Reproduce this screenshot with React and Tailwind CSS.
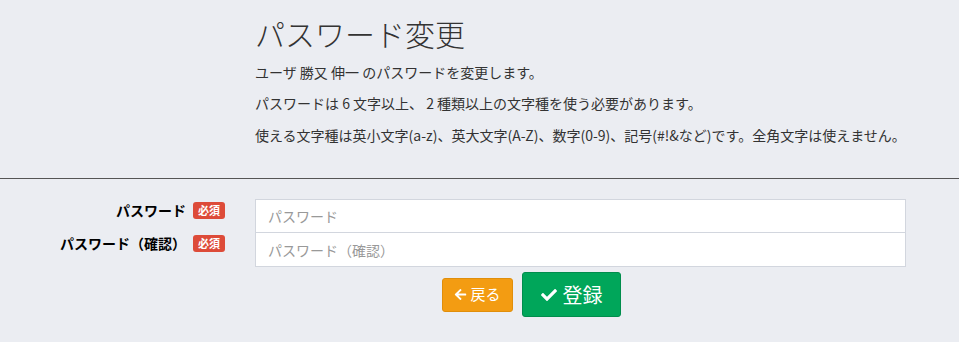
import { FaArrowLeft, FaCheck } from 'react-icons/fa';

export default function App() {
  return (
    <div
      className="min-h-[342px] w-full bg-[#ebedf2] text-[#333] overflow-hidden"
      style={{ fontFamily: '"Noto Sans CJK JP", "Noto Sans", sans-serif' }}
    >
      {/* ヘッダー */}
      <div className="pl-[255px] pt-[17px]">
        <h1 className="text-[30px] leading-[33px] font-light mb-[12px]">パスワード変更</h1>
        <p className="text-[14px] leading-[20px] mb-[11px]">ユーザ 勝又 伸一 のパスワードを変更します。</p>
        <p className="text-[14px] leading-[20px] mb-[12px]">パスワードは 6 文字以上、 2 種類以上の文字種を使う必要があります。</p>
        <p className="text-[14px] leading-[20px]">使える文字種は英小文字(a-z)、英大文字(A-Z)、数字(0-9)、記号(#!&amp;など)です。全角文字は使えません。</p>
      </div>

      <hr className="mt-[33px] border-t border-[#555]" />

      {/* フォーム */}
      <div className="mt-[20px]">
        <div className="flex items-start">
          <div className="w-[255px] flex justify-end items-center gap-[7px] pr-[30px] pt-px">
            <span className="text-[14px] leading-[20px] font-bold text-black">パスワード</span>
            <span className="bg-[#dd4b39] text-white text-[11px] font-bold leading-none px-[5px] py-[3px] rounded-[3px]">必須</span>
          </div>
          <input
            type="password"
            placeholder="パスワード"
            className="w-[651px] h-[34px] bg-white border border-[#d2d6de] px-[12px] text-[14px] placeholder:text-[#999] outline-none"
          />
        </div>
        <div className="flex items-start -mt-px">
          <div className="w-[255px] flex justify-end items-center gap-[7px] pr-[30px] pt-px">
            <span className="text-[14px] leading-[20px] font-bold text-black">パスワード（確認）</span>
            <span className="bg-[#dd4b39] text-white text-[11px] font-bold leading-none px-[5px] py-[3px] rounded-[3px]">必須</span>
          </div>
          <input
            type="password"
            placeholder="パスワード（確認）"
            className="w-[651px] h-[35px] bg-white border border-[#d2d6de] px-[12px] text-[14px] placeholder:text-[#999] outline-none"
          />
        </div>

        <div className="flex items-center gap-[9px] pl-[442px] mt-[5px]">
          <button className="flex items-center gap-[3px] h-[34px] w-[71px] justify-center bg-[#f39c12] border border-[#e08e0b] rounded-[3px] text-white text-[15px]">
            <FaArrowLeft className="text-[13px]" />
            戻る
          </button>
          <button className="flex items-center gap-[6px] h-[45px] w-[99px] justify-center bg-[#00a65a] border border-[#008d4c] rounded-[3px] text-white text-[20px]">
            <FaCheck className="text-[16px]" />
            登録
          </button>
        </div>
      </div>
    </div>
  );
}
